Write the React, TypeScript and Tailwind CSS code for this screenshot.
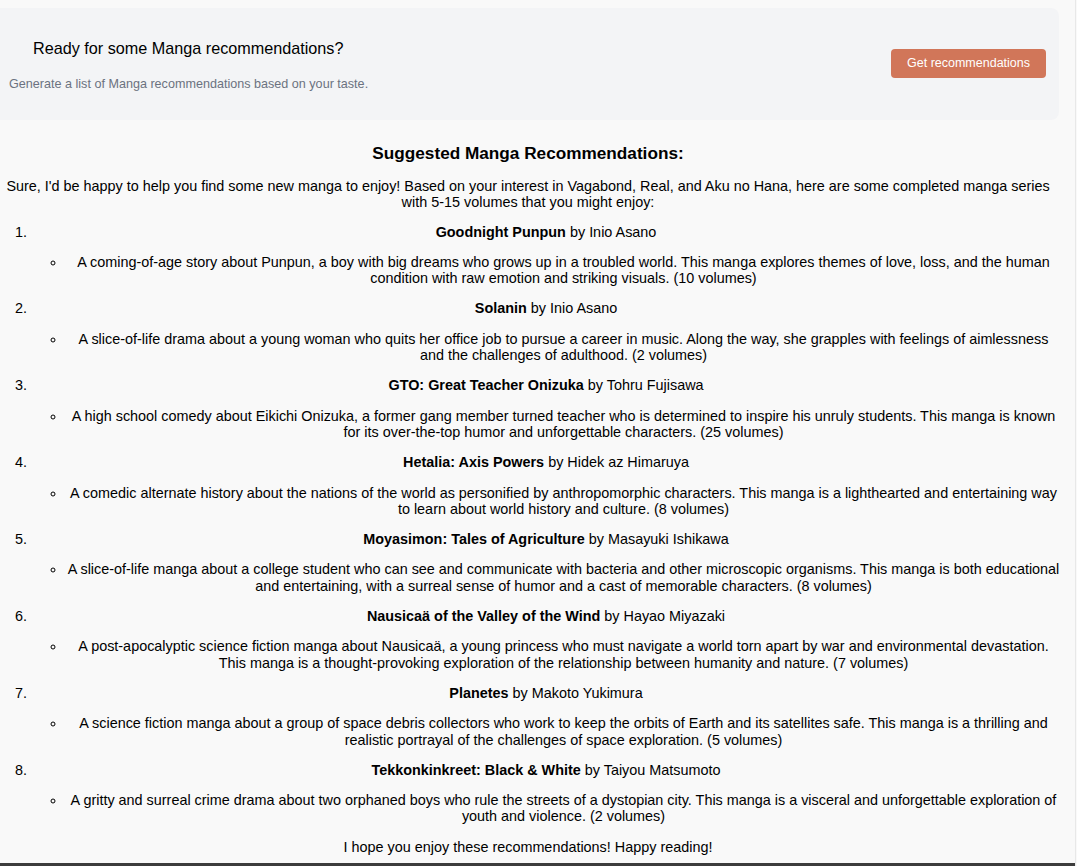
import React from "react";

type Item = { title: string; author: string; desc: string };

const items: Item[] = [
  {
    title: "Goodnight Punpun",
    author: "Inio Asano",
    desc: "A coming-of-age story about Punpun, a boy with big dreams who grows up in a troubled world. This manga explores themes of love, loss, and the human condition with raw emotion and striking visuals. (10 volumes)",
  },
  {
    title: "Solanin",
    author: "Inio Asano",
    desc: "A slice-of-life drama about a young woman who quits her office job to pursue a career in music. Along the way, she grapples with feelings of aimlessness and the challenges of adulthood. (2 volumes)",
  },
  {
    title: "GTO: Great Teacher Onizuka",
    author: "Tohru Fujisawa",
    desc: "A high school comedy about Eikichi Onizuka, a former gang member turned teacher who is determined to inspire his unruly students. This manga is known for its over-the-top humor and unforgettable characters. (25 volumes)",
  },
  {
    title: "Hetalia: Axis Powers",
    author: "Hidek az Himaruya",
    desc: "A comedic alternate history about the nations of the world as personified by anthropomorphic characters. This manga is a lighthearted and entertaining way to learn about world history and culture. (8 volumes)",
  },
  {
    title: "Moyasimon: Tales of Agriculture",
    author: "Masayuki Ishikawa",
    desc: "A slice-of-life manga about a college student who can see and communicate with bacteria and other microscopic organisms. This manga is both educational and entertaining, with a surreal sense of humor and a cast of memorable characters. (8 volumes)",
  },
  {
    title: "Nausicaä of the Valley of the Wind",
    author: "Hayao Miyazaki",
    desc: "A post-apocalyptic science fiction manga about Nausicaä, a young princess who must navigate a world torn apart by war and environmental devastation. This manga is a thought-provoking exploration of the relationship between humanity and nature. (7 volumes)",
  },
  {
    title: "Planetes",
    author: "Makoto Yukimura",
    desc: "A science fiction manga about a group of space debris collectors who work to keep the orbits of Earth and its satellites safe. This manga is a thrilling and realistic portrayal of the challenges of space exploration. (5 volumes)",
  },
  {
    title: "Tekkonkinkreet: Black & White",
    author: "Taiyou Matsumoto",
    desc: "A gritty and surreal crime drama about two orphaned boys who rule the streets of a dystopian city. This manga is a visceral and unforgettable exploration of youth and violence. (2 volumes)",
  },
];

export default function App() {
  return (
    <div
      className="w-[1077px] bg-[#f9f9f9] text-black"
      style={{ fontFamily: '"Liberation Sans", Arial, sans-serif' }}
    >
      <div className="w-[1076px] border-r border-[#e8e8e8] pt-2">
        <div className="flex h-[112px] w-[1059px] items-center justify-between rounded-r-lg bg-[#f3f4f6] pl-[9px] pr-[13px]">
          <div className="flex flex-col pt-[2px]">
            <h2 className="ml-6 text-[16.2px] leading-[18px] text-black">
              Ready for some Manga recommendations?
            </h2>
            <p className="mt-5 text-[12.6px] leading-[14px] text-[#6b7280]">
              Generate a list of Manga recommendations based on your taste.
            </p>
          </div>
          <button className="mt-[-1px] h-[29px] rounded-[4px] bg-[#d17659] px-4 text-[12.5px] text-white">
            Get recommendations
          </button>
        </div>

        <div className="w-[1056px] text-center text-[14.4px] leading-[16.3px]">
          <h3 className="mt-[23px] text-[17.2px] font-bold leading-[20px]">
            Suggested Manga Recommendations:
          </h3>
          <p className="mt-[15px]">
            Sure, I'd be happy to help you find some new manga to enjoy! Based on your interest in
            Vagabond, Real, and Aku no Hana, here are some completed manga series with 5-15 volumes
            that you might enjoy:
          </p>
          <ol className="mr-[-5px] mt-[13px] list-decimal pl-[31px]">
            {items.map((it) => (
              <li key={it.title}>
                <p className="mb-[14px]">
                  <strong className="font-bold">{it.title}</strong> by {it.author}
                </p>
                <ul className="list-[circle] pl-[35px]">
                  <li>{it.desc}</li>
                </ul>
                <div className="h-[14px]" />
              </li>
            ))}
          </ol>
          <p>I hope you enjoy these recommendations! Happy reading!</p>
        </div>
        <div className="mt-2 h-[3px] bg-[#3c3c3c]" />
      </div>
    </div>
  );
}
